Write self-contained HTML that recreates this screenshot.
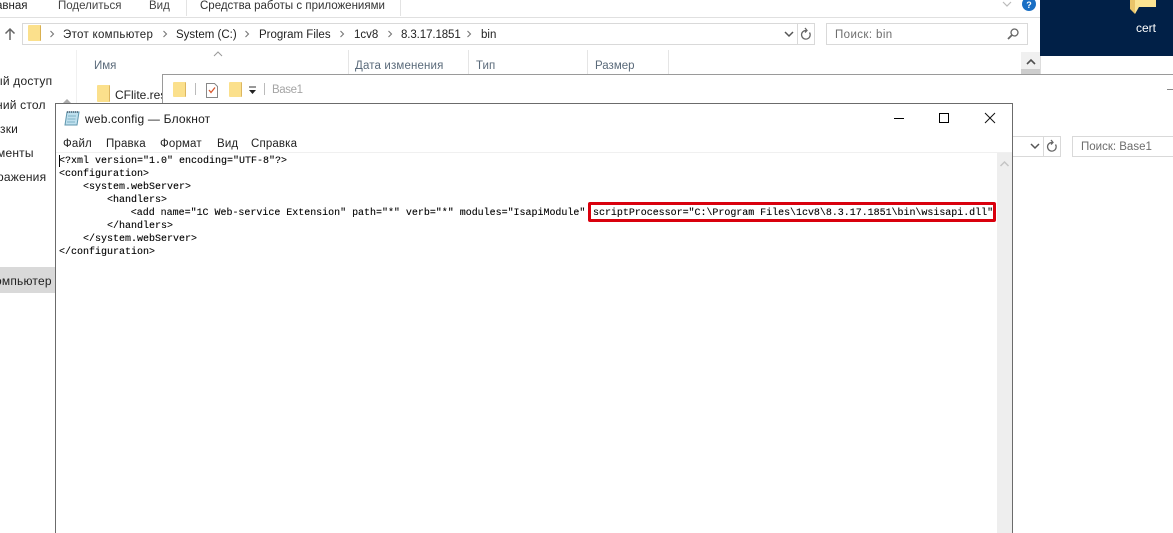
<!DOCTYPE html>
<html><head><meta charset="utf-8"><style>
html,body{margin:0;padding:0;background:#fff}
#p{position:relative;width:1173px;height:533px;overflow:hidden;background:#fff;font-family:"Liberation Sans","DejaVu Sans",sans-serif;font-size:11.5px;color:#222}
.a{position:absolute;white-space:pre}
.r{position:absolute}
.s{position:absolute;white-space:pre;font-size:12px;letter-spacing:.2px;line-height:14px}
.m{position:absolute;white-space:pre;font-family:"Liberation Mono",monospace;font-size:10px;line-height:13px;color:#000;left:59px;-webkit-text-stroke:.1px #000}
.h{color:#5a6a7a}
.c{position:absolute;top:30px}
.n{font-size:11.500px;letter-spacing:.15px;line-height:14px;top:137px}
</style></head><body><div id="p">
<!-- explorer ribbon -->
<div class="a" style="left:-4px;top:0;line-height:12px">авная</div>
<div class="a" style="left:58px;top:0;line-height:12px;color:#444">Поделиться</div>
<div class="a" style="left:149px;top:0;line-height:12px;color:#444">Вид</div>
<div class="a" style="left:200px;top:0;line-height:12px;color:#333">Средства работы с приложениями</div>
<div class="r" style="left:186px;top:0;width:1px;height:16px;background:#e3e3e3"></div>
<div class="r" style="left:400px;top:0;width:1px;height:16px;background:#e3e3e3"></div>
<div class="r" style="left:0;top:17px;width:1040px;height:1px;background:#e0e0e0"></div>
<svg class="r" style="left:1001px;top:0" width="12" height="10"><path d="M2 2l4 4 4-4" fill="none" stroke="#bbb" stroke-width="1.2"/></svg>
<svg class="r" style="left:1022px;top:0" width="14" height="11"><circle cx="7" cy="4" r="7" fill="#1a6fc4"/><text x="7" y="8" font-size="9" font-weight="bold" fill="#fff" text-anchor="middle" font-family="Liberation Sans">?</text></svg>
<!-- address bar -->
<svg class="r" style="left:3px;top:27px" width="14" height="14"><path d="M7 2v11M2.500 6.500L7 2l4.500 4.500" fill="none" stroke="#666" stroke-width="1.500"/></svg>
<div class="r" style="left:22px;top:23px;width:791px;height:20px;border:1px solid #d9d9d9"></div>
<div class="r" style="left:28px;top:25px;width:12px;height:16px;background:#fbe08c;border-right:1px solid #d9b050;border-radius:1px"></div>
<svg class="c" style="left:49px" width="6" height="8"><path d="M1.500 1l3 3-3 3" fill="none" stroke="#777" stroke-width="1.100"/></svg>
<div class="a" style="left:63px;top:28px;line-height:14px;letter-spacing:.3px">Этот компьютер</div>
<svg class="c" style="left:162px" width="6" height="8"><path d="M1.500 1l3 3-3 3" fill="none" stroke="#777" stroke-width="1.100"/></svg>
<div class="a" style="left:176px;top:28px;line-height:14px">System (C:)</div>
<svg class="c" style="left:244px" width="6" height="8"><path d="M1.500 1l3 3-3 3" fill="none" stroke="#777" stroke-width="1.100"/></svg>
<div class="a" style="left:259px;top:28px;line-height:14px">Program Files</div>
<svg class="c" style="left:339px" width="6" height="8"><path d="M1.500 1l3 3-3 3" fill="none" stroke="#777" stroke-width="1.100"/></svg>
<div class="a" style="left:354px;top:28px;line-height:14px">1cv8</div>
<svg class="c" style="left:387px" width="6" height="8"><path d="M1.500 1l3 3-3 3" fill="none" stroke="#777" stroke-width="1.100"/></svg>
<div class="a" style="left:401px;top:28px;line-height:14px;letter-spacing:-.1px">8.3.17.1851</div>
<svg class="c" style="left:466px" width="6" height="8"><path d="M1.500 1l3 3-3 3" fill="none" stroke="#777" stroke-width="1.100"/></svg>
<div class="a" style="left:481px;top:28px;line-height:14px">bin</div>
<svg class="r" style="left:783px;top:29px" width="12" height="10"><path d="M2 3l4 4 4-4" fill="none" stroke="#555" stroke-width="1.500"/></svg>
<div class="r" style="left:797px;top:23px;width:1px;height:21px;background:#d9d9d9"></div>
<svg class="r" style="left:798px;top:26px" width="16" height="16"><path d="M11.500 6.500A4.300 4.300 0 1 1 8 4.500M7 2l2 2.500-2 2" fill="none" stroke="#666" stroke-width="1.300"/></svg>
<div class="r" style="left:826px;top:23px;width:200px;height:20px;border:1px solid #d9d9d9"></div>
<div class="a" style="left:835px;top:28px;line-height:14px;color:#6d6d6d;letter-spacing:.4px">Поиск: bin</div>
<svg class="r" style="left:1006px;top:27px" width="14" height="14"><circle cx="8.500" cy="5.500" r="3.500" fill="none" stroke="#666" stroke-width="1.300"/><path d="M6 8l-4 4" stroke="#666" stroke-width="1.800"/></svg>
<!-- desktop -->
<div class="r" style="left:1040px;top:0;width:133px;height:56px;background:#012047"></div>
<svg class="r" style="left:1128px;top:0" width="30" height="16"><path d="M2 0h5v14l-5-5z" fill="#e9c46a"/><path d="M7 0h21v7H11l-4 7z" fill="#fbe392"/></svg>
<div class="a" style="left:1136px;top:22px;line-height:13px;color:#fff;font-size:12px">cert</div>
<div class="r" style="left:1021px;top:52px;width:19px;height:22px;background:#f0f0f0"></div>
<div class="r" style="left:1021px;top:69px;width:19px;height:5px;background:#cdcdcd"></div>
<svg class="r" style="left:1025px;top:57px" width="12" height="10"><path d="M2 7l4-4 4 4" fill="none" stroke="#505050" stroke-width="1.600"/></svg>
<div class="r" style="left:1040px;top:56px;width:1px;height:18px;background:#ddd"></div>
<!-- column headers -->
<div class="a h" style="left:94px;top:59px;line-height:14px">Имя</div>
<svg class="r" style="left:213px;top:51px" width="10" height="6"><path d="M1 5l4-4 4 4" fill="none" stroke="#999"/></svg>
<div class="r" style="left:348px;top:50px;width:1px;height:24px;background:#e5e5e5"></div>
<div class="a h" style="left:355px;top:59px;line-height:14px;letter-spacing:.15px">Дата изменения</div>
<div class="r" style="left:468px;top:50px;width:1px;height:24px;background:#e5e5e5"></div>
<div class="a h" style="left:476px;top:59px;line-height:14px">Тип</div>
<div class="r" style="left:587px;top:50px;width:1px;height:24px;background:#e5e5e5"></div>
<div class="a h" style="left:595px;top:59px;line-height:14px">Размер</div>
<div class="r" style="left:668px;top:50px;width:1px;height:24px;background:#e5e5e5"></div>
<div class="r" style="left:76px;top:50px;width:1px;height:53px;background:#f0f0f0"></div>
<!-- sidebar -->
<div class="s" style="left:-6px;top:74px">ый доступ</div>
<div class="s" style="left:-4px;top:98px">ний стол</div>
<div class="s" style="left:0;top:122px">зки</div>
<div class="s" style="left:-3px;top:146px">менты</div>
<div class="s" style="left:-3px;top:170px">ражения</div>
<div class="r" style="left:0;top:267px;width:55px;height:26px;background:#d9d9d9"></div>
<div class="s" style="left:-5px;top:274px">омпьютер</div>
<div class="r" style="left:62px;top:99px;width:0;height:0;border-left:5px solid transparent;border-right:5px solid transparent;border-bottom:5px solid #aaa"></div>
<!-- CFlite -->
<div class="r" style="left:97px;top:85px;width:12px;height:17px;background:#fbe08c;border-right:1px solid #dcb660;border-radius:1px"></div>
<div class="a" style="left:115px;top:88px;line-height:14px;width:47px;overflow:hidden;font-size:12px">CFlite.res</div>
<!-- Base1 window -->
<div class="r" style="left:162px;top:74px;width:1011px;height:459px;background:#fff;border-top:1px solid #9a9a9a;border-left:1px solid #9a9a9a;box-sizing:border-box"></div>
<div class="r" style="left:173px;top:82px;width:12px;height:15px;background:#fbe08c;border-right:1px solid #dcb660;border-radius:1px"></div>
<div class="r" style="left:195px;top:83px;width:1px;height:12px;background:#bbb"></div>
<svg class="r" style="left:205px;top:82px" width="14" height="17"><path d="M1.500 1.500h8l3 3v11h-11z" fill="#fff" stroke="#888"/><path d="M4 8l2 2.500 4-5" fill="none" stroke="#d8562c" stroke-width="1.300"/></svg>
<div class="r" style="left:229px;top:82px;width:12px;height:15px;background:#fbe08c;border-right:1px solid #dcb660;border-radius:1px"></div>
<svg class="r" style="left:248px;top:86px" width="10" height="9"><path d="M1 1h7" stroke="#333"/><path d="M1 4h7L4.500 8z" fill="#222"/></svg>
<div class="r" style="left:264px;top:83px;width:1px;height:12px;background:#bbb"></div>
<div class="a" style="left:272px;top:83px;line-height:14px;color:#a5a5a5;font-size:11.500px;letter-spacing:-.4px">Base1</div>
<div class="r" style="left:1167px;top:89px;width:6px;height:1px;background:#888"></div>
<!-- Base1 address right part -->
<div class="r" style="left:1013px;top:136px;width:47px;height:19px;border:1px solid #d9d9d9;border-left:0"></div>
<svg class="r" style="left:1029px;top:141px" width="12" height="10"><path d="M2 3l4 4 4-4" fill="none" stroke="#555" stroke-width="1.500"/></svg>
<div class="r" style="left:1043px;top:136px;width:1px;height:21px;background:#d9d9d9"></div>
<svg class="r" style="left:1044px;top:138px" width="16" height="16"><path d="M11.500 6.500A4.300 4.300 0 1 1 8 4.500M7 2l2 2.500-2 2" fill="none" stroke="#666" stroke-width="1.300"/></svg>
<div class="r" style="left:1072px;top:136px;width:110px;height:19px;border:1px solid #d9d9d9"></div>
<div class="a" style="left:1081px;top:140px;line-height:14px;color:#6d6d6d">Поиск: Base1</div>
<!-- Notepad -->
<div class="r" style="left:55px;top:103px;width:958px;height:440px;background:#fff;border:1px solid #6b6b6b;box-sizing:border-box"></div>
<svg class="r" style="left:63px;top:110px" width="18" height="17"><path d="M4 2h12l-2 13H2z" fill="#bfe0ee" stroke="#5f96ad"/><path d="M4 2h12" stroke="#456" stroke-width="1.500" stroke-dasharray="1 1"/><path d="M5 6h8M4.500 9h8M4 12h8" stroke="#7fb2c7"/></svg>
<div class="a" style="left:85px;top:111px;line-height:16px;font-size:12px;letter-spacing:.2px;color:#1a1a1a">web.config — Блокнот</div>
<div class="r" style="left:894px;top:118px;width:10px;height:1px;background:#000"></div>
<div class="r" style="left:939px;top:113px;width:8px;height:8px;border:1px solid #000"></div>
<svg class="r" style="left:984px;top:112px" width="12" height="12"><path d="M1 1l10 10M11 1L1 11" stroke="#111" stroke-width="1"/></svg>
<div class="a n" style="left:63px">Файл</div>
<div class="a n" style="left:106px">Правка</div>
<div class="a n" style="left:160px">Формат</div>
<div class="a n" style="left:217px">Вид</div>
<div class="a n" style="left:251px">Справка</div>
<div class="r" style="left:56px;top:152px;width:956px;height:1px;background:#f0f0f0"></div>
<div class="r" style="left:997px;top:153px;width:15px;height:380px;background:#eeeeee"></div>
<svg class="r" style="left:999px;top:160px" width="11" height="8"><path d="M1.500 6l4-4 4 4" fill="none" stroke="#c4c4c4" stroke-width="1.500"/></svg>
<div class="r" style="left:59px;top:155px;width:1px;height:12px;background:#000"></div>
<div class="m" style="top:155px">&lt;?xml version="1.0" encoding="UTF-8"?&gt;</div>
<div class="m" style="top:168px">&lt;configuration&gt;</div>
<div class="m" style="top:181px">    &lt;system.webServer&gt;</div>
<div class="m" style="top:194px">        &lt;handlers&gt;</div>
<div class="m" style="top:207px;letter-spacing:-.02px">            &lt;add name="1C Web-service Extension" path="*" verb="*" modules="IsapiModule"</div>
<div class="m" style="top:207px;left:593px;letter-spacing:-.03px">scriptProcessor="C:\Program Files\1cv8\8.3.17.1851\bin\wsisapi.dll"</div>
<div class="m" style="top:220px">        &lt;/handlers&gt;</div>
<div class="m" style="top:233px">    &lt;/system.webServer&gt;</div>
<div class="m" style="top:246px">&lt;/configuration&gt;</div>
<!-- red box -->
<div class="r" style="left:588px;top:202px;width:408px;height:20px;border:3px solid #d9000d;border-radius:2px;box-sizing:border-box"></div>
</div></body></html>
